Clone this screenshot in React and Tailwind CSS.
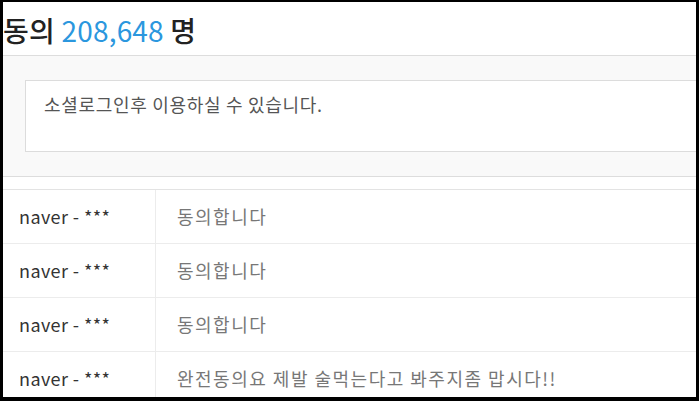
import React from 'react';

const rows = [
  { user: 'naver - ***', text: '동의합니다' },
  { user: 'naver - ***', text: '동의합니다' },
  { user: 'naver - ***', text: '동의합니다' },
  { user: 'naver - ***', text: '완전동의요 제발 술먹는다고 봐주지좀 맙시다!!' },
];

export default function App() {
  return (
    <div
      className="w-[699px] h-[401px] overflow-hidden bg-black pt-[2px] pl-[3px] pr-[3px] pb-[4px]"
      style={{ fontFamily: '"Noto Sans CJK KR", "Noto Sans", sans-serif' }}
    >
      <div className="h-full bg-white overflow-hidden">
        {/* heading */}
        <div className="h-[53px] flex items-center pt-[3px]">
          <h2 className="text-[28px] font-medium text-[#222] tracking-[0.2px]">
            동의 <span className="font-normal text-[#2b97de]">208,648</span> 명
          </h2>
        </div>

        {/* comment box area */}
        <div className="border-t border-b border-[#dddddd] bg-[#f9f9f9] pt-[24px] pb-[24px] pl-[22px]">
          <div className="h-[72px] border border-r-0 border-[#dcdcdc] bg-white pl-[18px] pt-[10px]">
            <p className="text-[18px] text-[#555] tracking-[0.7px]">소셜로그인후 이용하실 수 있습니다.</p>
          </div>
        </div>

        {/* list */}
        <div className="mt-[12px] border-t border-[#e3e3e3]">
          {rows.map((r, i) => (
            <div key={i} className="flex h-[54px] border-b border-[#ececec]">
              <div className="w-[153px] shrink-0 border-r border-[#ececec] pl-[16px] flex items-center text-[18px] text-[#333] tracking-[0.4px]">
                {r.user}
              </div>
              <div className="flex-1 pl-[21px] flex items-center text-[18px] text-[#777] tracking-[1.5px]">
                {r.text}
              </div>
            </div>
          ))}
        </div>
      </div>
    </div>
  );
}
